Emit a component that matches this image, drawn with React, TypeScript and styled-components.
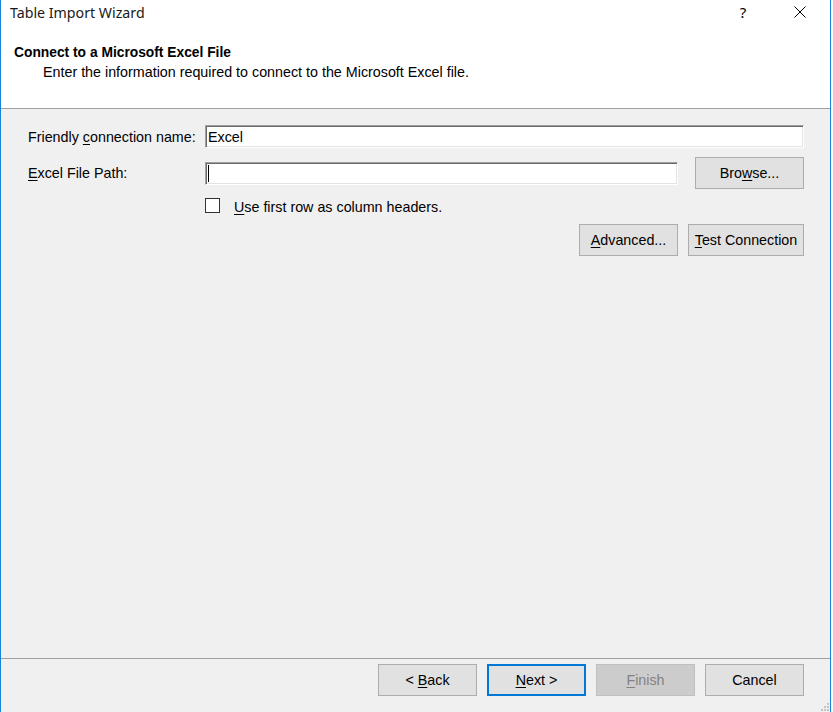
import React from "react";
import styled, { createGlobalStyle } from "styled-components";

const Global = createGlobalStyle`
  html, body { margin: 0; padding: 0; background: #ffffff; }
  body { font-family: "Liberation Sans", Arial, sans-serif; font-size: 14.3px; color: #000; }
  * { box-sizing: border-box; }
`;

const Window = styled.div`
  position: relative;
  width: 831px;
  height: 712px;
  display: flex;
  flex-direction: column;
  border-left: 1px solid #1883d7;
  border-right: 1px solid #1883d7;
  background: #f0f0f0;
  overflow: hidden;
`;

const TitleBar = styled.div`
  height: 26px;
  display: flex;
  align-items: center;
  padding-left: 9px;
  padding-bottom: 2px;
  background: #fff;
  font-family: "Noto Sans", "Open Sans", sans-serif;
  font-size: 14.2px;
  color: #1a1a1a;
`;

const TitleText = styled.div`
  flex: 1;
`;

const TitleButton = styled.div<{ $w: number }>`
  width: ${(p) => p.$w}px;
  height: 24px;
  display: flex;
  align-items: center;
  justify-content: center;
  font-size: 15px;
  color: #000;
`;

const Header = styled.div`
  height: 83px;
  background: #fff;
  padding: 19px 0 0 13px;
  border-bottom: 1px solid #a0a0a0;
`;

const HeaderTitle = styled.div`
  font-weight: bold;
  font-size: 13.8px;
  line-height: 16px;
`;

const HeaderSub = styled.div`
  line-height: 16px;
  padding-left: 29px;
  margin-top: 3px;
`;

const Body = styled.div`
  flex: 1;
  padding: 16px 26px 0 27px;
  display: flex;
  flex-direction: column;
`;

const Row = styled.div<{ $mt?: number; $h: number }>`
  display: flex;
  align-items: center;
  height: ${(p) => p.$h}px;
  margin-top: ${(p) => p.$mt ?? 0}px;
`;

const Label = styled.div`
  width: 177px;
  flex: none;
  line-height: 16px;
`;

const Input = styled.div<{ $w?: number }>`
  height: 23px;
  ${(p) => (p.$w ? `width: ${p.$w}px; flex: none;` : "flex: 1;")}
  background: #fff;
  border-top: 1px solid #a0a0a0;
  border-left: 1px solid #a0a0a0;
  border-right: 1px solid #fff;
  border-bottom: 1px solid #fff;
  box-shadow: inset 1px 1px 0 #696969, inset -1px -1px 0 #e3e3e3;
  display: flex;
  align-items: center;
  padding-left: 2px;
  line-height: 16px;
`;

const Caret = styled.span`
  width: 1px;
  height: 17px;
  background: #000;
`;

const Button = styled.div<{ $w: number; $variant?: "default" | "focus" | "disabled" }>`
  width: ${(p) => p.$w}px;
  height: 32px;
  flex: none;
  display: flex;
  align-items: center;
  justify-content: center;
  background: ${(p) => (p.$variant === "disabled" ? "#cccccc" : "#e1e1e1")};
  border: ${(p) =>
    p.$variant === "focus"
      ? "2px solid #0078d7"
      : p.$variant === "disabled"
      ? "1px solid #bfbfbf"
      : "1px solid #adadad"};
  color: ${(p) => (p.$variant === "disabled" ? "#838383" : "#000")};
  line-height: 16px;
`;

const Spacer = styled.div<{ $w: number }>`
  width: ${(p) => p.$w}px;
  flex: none;
`;

const CheckBox = styled.div`
  width: 15px;
  height: 15px;
  flex: none;
  background: #fff;
  border: 1px solid #333;
`;

const CheckLabel = styled.div`
  margin-left: 14px;
  padding-top: 3px;
  line-height: 16px;
`;

const ButtonRow = styled.div`
  display: flex;
  justify-content: flex-end;
  gap: 10px;
  margin-top: 11px;
  height: 32px;
`;

const Footer = styled.div`
  height: 54px;
  border-top: 1px solid #a0a0a0;
  padding: 5px 26px 0 0;
  display: flex;
  justify-content: flex-end;
  align-items: flex-start;
  gap: 10px;
`;

const Grip = styled.svg`
  position: absolute;
  right: 0;
  bottom: 0;
`;

const U = styled.span`
  text-decoration: underline;
  text-underline-offset: 2px;
`;

export default function App() {
  return (
    <>
      <Global />
      <Window>
        <TitleBar>
          <TitleText>Table Import Wizard</TitleText>
          <TitleButton $w={46}>?</TitleButton>
          <Spacer $w={11} />
          <TitleButton $w={46}>
            <svg width="12" height="12" viewBox="0 0 12 12">
              <path d="M0.5 0.5 L11.5 11.5 M11.5 0.5 L0.5 11.5" stroke="#000" strokeWidth="1" fill="none" />
            </svg>
          </TitleButton>
          <Spacer $w={7} />
        </TitleBar>
        <Header>
          <HeaderTitle>Connect to a Microsoft Excel File</HeaderTitle>
          <HeaderSub>Enter the information required to connect to the Microsoft Excel file.</HeaderSub>
        </Header>
        <Body>
          <Row $h={23}>
            <Label>
              Friendly <U>c</U>onnection name:
            </Label>
            <Input>Excel</Input>
          </Row>
          <Row $h={32} $mt={9}>
            <Label>
              <U>E</U>xcel File Path:
            </Label>
            <Input $w={473}>
              <Caret />
            </Input>
            <Spacer $w={17} />
            <Button $w={109}>
              <span>
                Bro<U>w</U>se...
              </span>
            </Button>
          </Row>
          <Row $h={15} $mt={9}>
            <Spacer $w={177} />
            <CheckBox />
            <CheckLabel>
              <U>U</U>se first row as column headers.
            </CheckLabel>
          </Row>
          <ButtonRow>
            <Button $w={99}>
              <span>
                <U>A</U>dvanced...
              </span>
            </Button>
            <Button $w={116}>
              <span>
                <U>T</U>est Connection
              </span>
            </Button>
          </ButtonRow>
        </Body>
        <Footer>
          <Button $w={99}>
            <span>
              &lt; <U>B</U>ack
            </span>
          </Button>
          <Button $w={99} $variant="focus">
            <span>
              <U>N</U>ext &gt;
            </span>
          </Button>
          <Button $w={99} $variant="disabled">
            <span>
              <U>F</U>inish
            </span>
          </Button>
          <Button $w={99}>Cancel</Button>
        </Footer>
        <Grip width="10" height="10" viewBox="0 0 10 10">
          <rect x="7" y="1" width="2" height="2" fill="#c4c4c4" />
          <rect x="4" y="4" width="2" height="2" fill="#c4c4c4" />
          <rect x="7" y="4" width="2" height="2" fill="#c4c4c4" />
          <rect x="1" y="7" width="2" height="2" fill="#c4c4c4" />
          <rect x="4" y="7" width="2" height="2" fill="#c4c4c4" />
          <rect x="7" y="7" width="2" height="2" fill="#c4c4c4" />
        </Grip>
      </Window>
    </>
  );
}
